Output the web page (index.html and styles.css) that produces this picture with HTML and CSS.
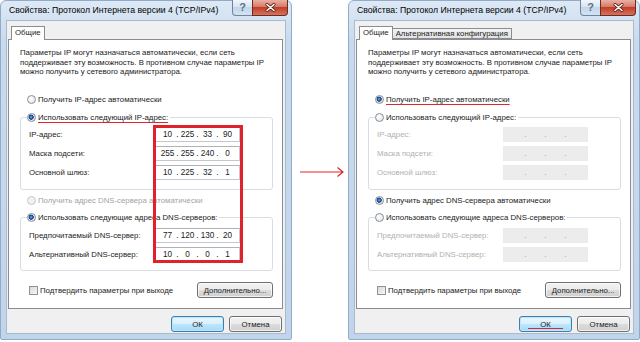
FILE: index.html
```html
<!DOCTYPE html>
<html>
<head>
    <title>Свойства: Протокол Интернета версии 4 (TCP/IPv4)</title>
    <link rel="stylesheet" href="styles.css">
</head>
<body>
<div class="screen">
    <!-- before: static address -->
    <div class="window">
        <div class="titlebar">
            <span class="title">Свойства: Протокол Интернета версии 4 (TCP/IPv4)</span>
            <div class="caption-buttons">
                <span class="btn-help">?</span>
                <span class="btn-close"><svg width="11" height="9" viewBox="0 0 11 9"><path d="M2 1.5 L9 7.5 M9 1.5 L2 7.5" stroke="#5a2219" stroke-width="3" stroke-linecap="round"/><path d="M2 1.5 L9 7.5 M9 1.5 L2 7.5" stroke="#fff" stroke-width="1.6" stroke-linecap="round"/></svg></span>
            </div>
        </div>
        <div class="client">
            <div class="tabs">
                <span class="tab active">Общие</span>
            </div>
            <div class="panel">
                <p class="intro">Параметры IP могут назначаться автоматически, если сеть<br>поддерживает эту возможность. В противном случае параметры IP<br>можно получить у сетевого администратора.</p>
                <div class="option standalone"><span class="radio"></span>Получить IP-адрес автоматически</div>
                <fieldset class="group">
                    <legend class="option"><span class="radio checked"></span><span class="marked">Использовать следующий IP-адрес:</span></legend>
                    <div class="rows">
                        <div class="field"><span>IP-адрес:</span><span class="ip"><span>10</span><i>.</i><span>225</span><i>.</i><span>33</span><i>.</i><span>90</span></span></div>
                        <div class="field"><span>Маска подсети:</span><span class="ip"><span>255</span><i>.</i><span>255</span><i>.</i><span>240</span><i>.</i><span>0</span></span></div>
                        <div class="field"><span>Основной шлюз:</span><span class="ip"><span>10</span><i>.</i><span>225</span><i>.</i><span>32</span><i>.</i><span>1</span></span></div>
                    </div>
                </fieldset>
                <div class="option standalone second disabled"><span class="radio"></span>Получить адрес DNS-сервера автоматически</div>
                <fieldset class="group dns">
                    <legend class="option"><span class="radio checked"></span>Использовать следующие адреса DNS-серверов:</legend>
                    <div class="rows">
                        <div class="field"><span>Предпочитаемый DNS-сервер:</span><span class="ip"><span>77</span><i>.</i><span>120</span><i>.</i><span>130</span><i>.</i><span>20</span></span></div>
                        <div class="field"><span>Альтернативный DNS-сервер:</span><span class="ip"><span>10</span><i>.</i><span>0</span><i>.</i><span>0</span><i>.</i><span>1</span></span></div>
                    </div>
                </fieldset>
                <div class="panel-foot">
                    <div class="option"><span class="checkbox"></span>Подтвердить параметры при выходе</div>
                    <span class="button wide">Дополнительно...</span>
                </div>
                <div class="annot-box"></div>
            </div>
            <div class="actions">
                <span class="button default">ОК</span>
                <span class="button">Отмена</span>
            </div>
        </div>
    </div>

    <div class="arrow">
        <svg width="56" height="12" viewBox="0 0 56 12"><path d="M8 6 H51 M45.5 1.5 L51 6 L45.5 10.5" stroke="#e0262c" stroke-width="1.2" fill="none"/></svg>
    </div>

    <!-- after: automatic address -->
    <div class="window">
        <div class="titlebar">
            <span class="title">Свойства: Протокол Интернета версии 4 (TCP/IPv4)</span>
            <div class="caption-buttons">
                <span class="btn-help">?</span>
                <span class="btn-close"><svg width="11" height="9" viewBox="0 0 11 9"><path d="M2 1.5 L9 7.5 M9 1.5 L2 7.5" stroke="#5a2219" stroke-width="3" stroke-linecap="round"/><path d="M2 1.5 L9 7.5 M9 1.5 L2 7.5" stroke="#fff" stroke-width="1.6" stroke-linecap="round"/></svg></span>
            </div>
        </div>
        <div class="client">
            <div class="tabs">
                <span class="tab active">Общие</span>
                <span class="tab">Альтернативная конфигурация</span>
            </div>
            <div class="panel">
                <p class="intro">Параметры IP могут назначаться автоматически, если сеть<br>поддерживает эту возможность. В противном случае параметры IP<br>можно получить у сетевого администратора.</p>
                <div class="option standalone"><span class="radio checked"></span><span class="marked">Получить IP-адрес автоматически</span></div>
                <fieldset class="group off">
                    <legend class="option"><span class="radio"></span>Использовать следующий IP-адрес:</legend>
                    <div class="rows">
                        <div class="field"><span>IP-адрес:</span><span class="ip"><span></span><i>.</i><span></span><i>.</i><span></span><i>.</i><span></span></span></div>
                        <div class="field"><span>Маска подсети:</span><span class="ip"><span></span><i>.</i><span></span><i>.</i><span></span><i>.</i><span></span></span></div>
                        <div class="field"><span>Основной шлюз:</span><span class="ip"><span></span><i>.</i><span></span><i>.</i><span></span><i>.</i><span></span></span></div>
                    </div>
                </fieldset>
                <div class="option standalone second"><span class="radio checked"></span>Получить адрес DNS-сервера автоматически</div>
                <fieldset class="group dns off">
                    <legend class="option"><span class="radio"></span>Использовать следующие адреса DNS-серверов:</legend>
                    <div class="rows">
                        <div class="field"><span>Предпочитаемый DNS-сервер:</span><span class="ip"><span></span><i>.</i><span></span><i>.</i><span></span><i>.</i><span></span></span></div>
                        <div class="field"><span>Альтернативный DNS-сервер:</span><span class="ip"><span></span><i>.</i><span></span><i>.</i><span></span><i>.</i><span></span></span></div>
                    </div>
                </fieldset>
                <div class="panel-foot">
                    <div class="option"><span class="checkbox"></span>Подтвердить параметры при выходе</div>
                    <span class="button wide">Дополнительно...</span>
                </div>
            </div>
            <div class="actions">
                <span class="button default marked-btn">ОК</span>
                <span class="button">Отмена</span>
            </div>
        </div>
    </div>
</div>
</body>
</html>
```

FILE: styles.css
```css
* {
    box-sizing: border-box;
}

body {
    margin: 0;
    background: #fff;
    font-family: "Liberation Sans", Arial, sans-serif;
    font-size: 7.8px;
    color: #222;
}

.screen {
    display: flex;
    width: 640px;
    height: 342px;
}

/* window frame */
.window {
    width: 292px;
    height: 340px;
    display: flex;
    flex-direction: column;
    padding: 0 5px 5px;
    background: linear-gradient(to bottom, #dde9f5, #c8daee 40px, #c1d5ea);
    border: 1px solid #93abc8;
    border-radius: 6px 6px 2px 2px;
}

.titlebar {
    height: 19px;
    display: flex;
    justify-content: space-between;
    align-items: flex-start;
}

.title {
    padding: 3px 0 0 3px;
    font-size: 8.7px;
    line-height: 12px;
    color: #000;
}

.caption-buttons {
    display: flex;
    margin: -1px -2px 0 0;
}

.btn-help {
    width: 20px;
    height: 16px;
    border: 1px solid #6f84a0;
    border-top: none;
    border-right: none;
    border-radius: 0 0 0 4px;
    background: linear-gradient(to bottom, #f1f6fb, #d6e3f1 50%, #c3d5e9 50%, #d3e3f3);
    color: #58728f;
    font-size: 11px;
    font-weight: bold;
    line-height: 15px;
    text-align: center;
}

.btn-close {
    width: 36px;
    height: 16px;
    display: flex;
    align-items: center;
    justify-content: center;
    border: 1px solid #6b2c23;
    border-top: none;
    border-radius: 0 0 4px 0;
    background: linear-gradient(to bottom, #eab0a3, #d77a67 45%, #c43d27 50%, #d4735f);
}

.client {
    flex: 1;
    display: flex;
    flex-direction: column;
    padding: 5px 2px 0 1px;
    background: #f0f0f0;
    border: 1px solid #a7bad0;
}

/* tabs */
.tabs {
    display: flex;
    align-items: flex-start;
    height: 13px;
    padding-left: 3px;
}

.tab {
    height: 11px;
    margin-top: 2px;
    padding: 0 3px;
    border: 1px solid #898c95;
    border-left: none;
    background: linear-gradient(to bottom, #f3f3f3, #e2e2e2);
    line-height: 10px;
}

.tab.active {
    position: relative;
    z-index: 1;
    height: 14px;
    margin-top: 0;
    border-left: 1px solid #898c95;
    border-bottom: none;
    background: #fff;
    line-height: 12px;
}

.panel {
    position: relative;
    padding: 8px 9px 10px 11px;
    background: #fff;
    border: 1px solid #898c95;
}

.intro {
    margin: 0;
    line-height: 9.5px;
}

/* radio and check options */
.option {
    display: flex;
    align-items: center;
    height: 12px;
    white-space: nowrap;
}

.option.standalone {
    margin-top: 16.5px;
    padding-left: 7px;
}

.option.standalone.second {
    margin-top: 4px;
}

.option.disabled {
    color: #a3a3a3;
}

.radio {
    width: 9px;
    height: 9px;
    margin-right: 2px;
    flex: none;
    border: 1px solid #8a9099;
    border-radius: 50%;
    background: radial-gradient(circle at 40% 40%, #fff, #dcdfe3);
}

.radio.checked {
    background: radial-gradient(circle at 45% 45%, #7fb2e8 0, #2a63ae 1.4px, #123f80 2.3px, #eef2f6 2.9px, #cdd4dc 4.5px);
}

.disabled .radio {
    border-color: #c4c6c9;
    background: #f2f2f2;
}

.checkbox {
    width: 9px;
    height: 9px;
    margin-right: 2px;
    border: 1px solid #8f9296;
    background: linear-gradient(135deg, #d9d9d9, #f7f7f7);
}

.marked {
    text-decoration: underline;
    text-decoration-color: #e3242b;
    text-underline-offset: 2px;
}

/* group boxes */
.group {
    min-width: 0;
    margin: 6px 0 0;
    padding: 0 32px 7.5px 6px;
    border: 1px solid #d7dde3;
    border-radius: 3px;
}

.group legend {
    padding: 0 2px 0 0;
}

.group.dns {
    margin-top: 5px;
    padding-bottom: 6.5px;
}

.rows {
    padding: 1.5px 0 0 2px;
}

.dns .rows {
    padding-top: 2.5px;
}

.field {
    display: flex;
    justify-content: space-between;
    align-items: center;
    height: 19px;
}

.ip {
    display: flex;
    align-items: center;
    width: 85px;
    height: 15px;
    padding: 0 3px;
    border: 1px solid #c3c8cf;
    border-top-color: #aeb3ba;
    background: #fff;
    font-size: 8.2px;
}

.ip span {
    flex: 1;
    text-align: center;
}

.ip i {
    width: 3px;
    font-style: normal;
    text-align: center;
}

.off .field {
    color: #b0b0b0;
}

.off .ip {
    border-color: #ebebeb;
    background: #ececec;
    color: #a8a8a8;
}

.panel-foot {
    display: flex;
    justify-content: space-between;
    align-items: center;
    height: 16px;
    margin-top: 11px;
}

.panel-foot .option {
    padding-left: 9px;
}

/* push buttons */
.button {
    display: flex;
    align-items: center;
    justify-content: center;
    width: 53px;
    height: 16px;
    border: 1px solid #707070;
    border-radius: 3px;
    background: linear-gradient(to bottom, #f2f2f2, #ebebeb 50%, #dddddd 50%, #cfcfcf);
    box-shadow: inset 0 0 0 1px rgba(255, 255, 255, 0.7);
    color: #222;
}

.button.wide {
    width: 76px;
}

.button.default {
    position: relative;
    border-color: #3c7fb1;
    background: linear-gradient(to bottom, #eaf6fd, #d9f0fc 50%, #bee6fd 50%, #a7d9f5);
    box-shadow: inset 0 0 0 1px #bfe3f7;
}

.marked-btn::after {
    content: "";
    position: absolute;
    left: 8px;
    right: 8px;
    bottom: 2px;
    border-bottom: 1px solid #e3242b;
}

.actions {
    display: flex;
    justify-content: flex-end;
    gap: 5px;
    padding: 7px 1px 0 0;
}

/* red annotation frame over the values */
.annot-box {
    position: absolute;
    left: 144px;
    top: 85px;
    width: 90px;
    height: 138px;
    border: 3px solid #e0232a;
}

.arrow {
    width: 56px;
}

.arrow svg {
    display: block;
    margin-top: 166px;
}
```
